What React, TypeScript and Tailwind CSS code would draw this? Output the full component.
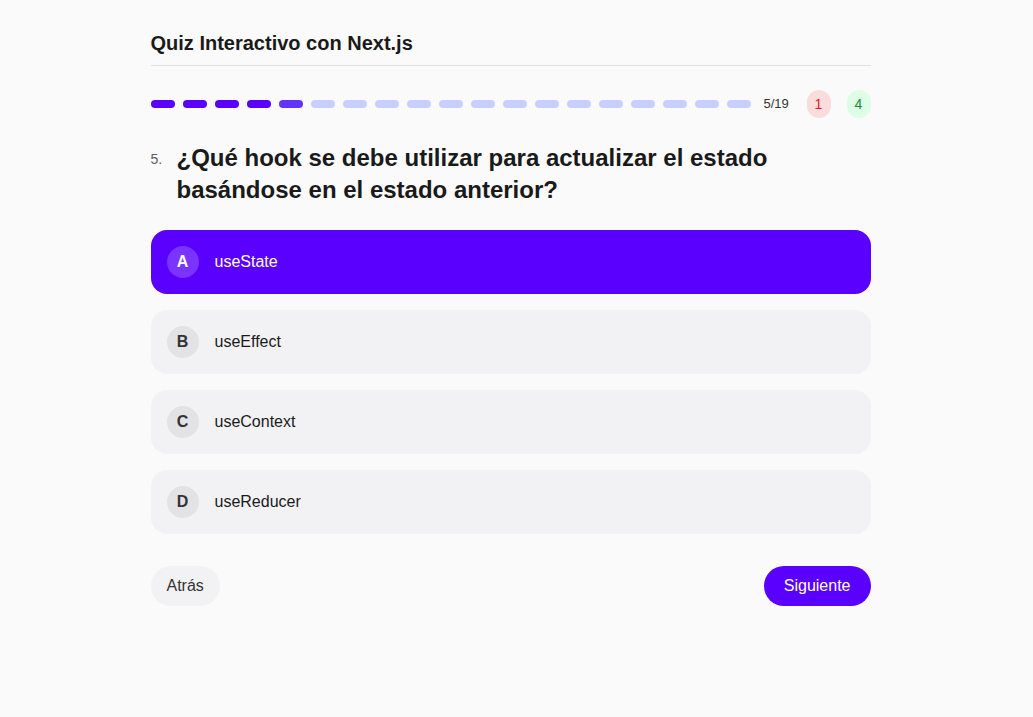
import { useState } from "react";

const TOTAL = 19;
const CURRENT = 5;

const options = [
  { key: "A", label: "useState" },
  { key: "B", label: "useEffect" },
  { key: "C", label: "useContext" },
  { key: "D", label: "useReducer" },
];

export default function App() {
  const [selected, setSelected] = useState("A");

  return (
    <div
      className="min-h-[717px] w-full bg-[#fafafa] pr-[12px] text-[#1a1a1a]"
      style={{ fontFamily: "Arial, 'Liberation Sans', sans-serif" }}
    >
      <div className="mx-auto w-[720px] pt-[30px]">
        <header className="border-b border-[#e2e2e4] pb-[9px]">
          <h1 className="text-[20px] font-bold leading-[26px] text-[#1a1a1a]">
            Quiz Interactivo con Next.js
          </h1>
        </header>

        {/* progress */}
        <div className="mt-[24px] flex h-[28px] items-center">
          <div className="flex gap-[8px]">
            {Array.from({ length: TOTAL }).map((_, i) => (
              <div
                key={i}
                className={
                  i < CURRENT - 1
                    ? "h-[8px] w-[24px] rounded-full bg-[#5a00ff]"
                    : i === CURRENT - 1
                    ? "h-[8px] w-[24px] rounded-full bg-[#6434ff]"
                    : "h-[8px] w-[24px] rounded-full bg-[#c7cfff]"
                }
              />
            ))}
          </div>
          <span className="ml-[13px] text-[13px] text-[#333]">
            {CURRENT}/{TOTAL}
          </span>
          <div className="ml-auto flex gap-[16px]">
            <span className="flex h-[28px] w-[24px] items-center justify-center rounded-full bg-[#fadcdc] text-[14px] text-[#d9202c]">
              1
            </span>
            <span className="flex h-[28px] w-[24px] items-center justify-center rounded-full bg-[#ddfde4] text-[14px] text-[#1f8a3a]">
              4
            </span>
          </div>
        </div>

        {/* question */}
        <div className="mt-[24px] flex items-start">
          <span className="mt-[7px] w-[26px] text-[14px] text-[#5c5c66]">
            {CURRENT}.
          </span>
          <h2 className="text-[24px] font-bold leading-[32px] text-[#1a1a1a]">
            ¿Qué hook se debe utilizar para actualizar el estado
            <br />
            basándose en el estado anterior?
          </h2>
        </div>

        {/* options */}
        <div className="mt-[24px] flex flex-col gap-[16px]">
          {options.map((o) => {
            const active = selected === o.key;
            return (
              <button
                key={o.key}
                onClick={() => setSelected(o.key)}
                className={
                  active
                    ? "flex h-[64px] items-center rounded-[16px] bg-[#5a00ff] px-[16px] text-left text-white"
                    : "flex h-[64px] items-center rounded-[16px] bg-[#f2f2f4] px-[16px] text-left text-[#1a1a1a]"
                }
              >
                <span
                  className={
                    active
                      ? "flex h-[32px] w-[32px] items-center justify-center rounded-full bg-white/20 text-[16px] font-bold text-white"
                      : "flex h-[32px] w-[32px] items-center justify-center rounded-full bg-[#e3e3e6] text-[16px] font-bold text-[#333]"
                  }
                >
                  {o.key}
                </span>
                <span className="ml-[16px] text-[16px]">{o.label}</span>
              </button>
            );
          })}
        </div>

        {/* nav */}
        <div className="mt-[32px] flex items-center justify-between">
          <button className="h-[40px] rounded-full bg-[#f2f2f4] px-[16px] text-[16px] text-[#333]">
            Atrás
          </button>
          <button className="h-[40px] rounded-full bg-[#5a00ff] px-[20px] text-[16px] text-white">
            Siguiente
          </button>
        </div>
      </div>
    </div>
  );
}
